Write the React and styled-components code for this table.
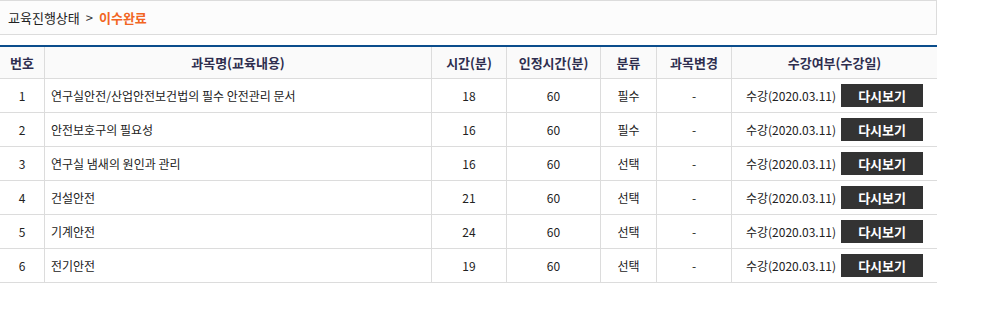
import React from "react";
import styled, { createGlobalStyle } from "styled-components";

const Global = createGlobalStyle`
  html, body { margin: 0; padding: 0; background: #fff; }
  body { font-family: "Noto Sans CJK KR", "Noto Sans", sans-serif; color: #222; }
`;

const Page = styled.div`
  width: 937px;
  display: flex;
  flex-direction: column;
  gap: 10px;
`;

const Crumb = styled.div`
  box-sizing: border-box;
  height: 35px;
  display: flex;
  align-items: center;
  gap: 6px;
  padding-left: 8px;
  background: #fcfcfc;
  border: 1px solid #dcdcdc;
  border-left: none;
  font-size: 13px;
  color: #222;
`;

const Sep = styled.span`
  color: #333;
  font-size: 13px;
`;

const Current = styled.span`
  color: #f26522;
  font-weight: 700;
`;

const Grid = styled.div`
  display: grid;
  grid-template-columns: 45px 387px 75px 94px 56px 75px 1fr;
  border-top: 2px solid #0b4d8c;
`;

const Cell = styled.div`
  box-sizing: border-box;
  height: ${(p) => (p.$head ? "32px" : "34px")};
  display: flex;
  align-items: center;
  justify-content: ${(p) => (p.$left ? "flex-start" : "center")};
  padding-left: ${(p) => (p.$left ? "6px" : "0")};
  border-bottom: 1px solid #dcdcdc;
  border-right: ${(p) => (p.$last ? "none" : "1px solid #dcdcdc")};
  background: ${(p) => (p.$head ? "#fafafa" : "#fff")};
  font-size: ${(p) => (p.$head ? "13px" : "12px")};
  font-weight: ${(p) => (p.$head ? 700 : 400)};
  color: ${(p) => (p.$head ? "#2e2e4f" : "#222")};
  white-space: nowrap;
`;

const Status = styled.div`
  display: flex;
  align-items: center;
  gap: 5px;
`;

const Replay = styled.button`
  width: 82px;
  height: 23px;
  border: none;
  background: #333;
  color: #fff;
  font-family: "Noto Sans CJK KR", "Noto Sans", sans-serif;
  font-size: 13px;
  font-weight: 700;
  padding: 0;
  cursor: pointer;
`;

const heads = ["번호", "과목명(교육내용)", "시간(분)", "인정시간(분)", "분류", "과목변경", "수강여부(수강일)"];

const rows = [
  ["연구실안전/산업안전보건법의 필수 안전관리 문서", 18, "필수"],
  ["안전보호구의 필요성", 16, "필수"],
  ["연구실 냄새의 원인과 관리", 16, "선택"],
  ["건설안전", 21, "선택"],
  ["기계안전", 24, "선택"],
  ["전기안전", 19, "선택"],
];

export default function App() {
  return (
    <>
      <Global />
      <Page>
        <Crumb>
          <span>교육진행상태</span>
          <Sep>&gt;</Sep>
          <Current>이수완료</Current>
        </Crumb>
        <Grid>
          {heads.map((h, i) => (
            <Cell key={h} $head $last={i === heads.length - 1}>
              {h}
            </Cell>
          ))}
          {rows.map(([name, time, kind], i) => (
            <React.Fragment key={i}>
              <Cell>{i + 1}</Cell>
              <Cell $left>{name}</Cell>
              <Cell>{time}</Cell>
              <Cell>60</Cell>
              <Cell>{kind}</Cell>
              <Cell>-</Cell>
              <Cell $last>
                <Status>
                  <span>수강(2020.03.11)</span>
                  <Replay>다시보기</Replay>
                </Status>
              </Cell>
            </React.Fragment>
          ))}
        </Grid>
      </Page>
    </>
  );
}
